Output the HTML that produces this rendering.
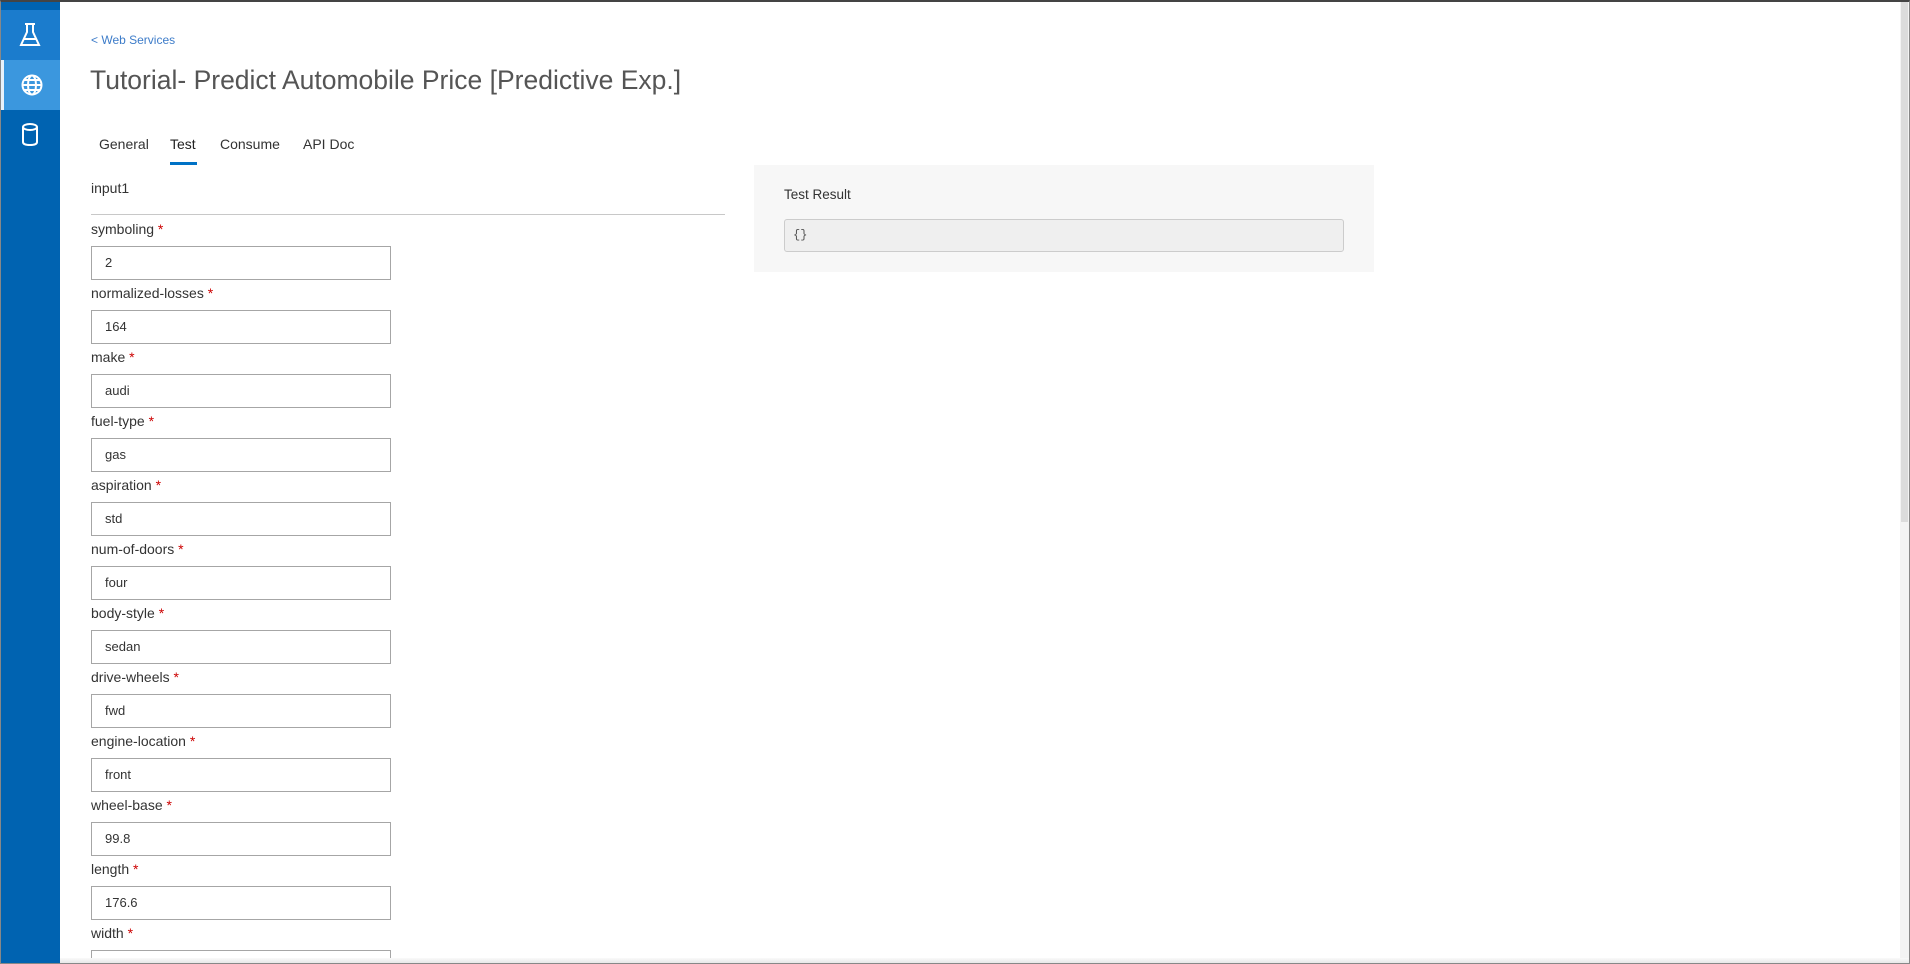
<!DOCTYPE html>
<html><head><meta charset="utf-8"><style>
*{margin:0;padding:0;box-sizing:border-box}
html,body{width:1910px;height:964px;overflow:hidden;background:#fff;font-family:"Segoe UI","Liberation Sans",sans-serif;color:#333}
.frame{position:absolute;left:0;top:0;width:1910px;height:964px;border:1px solid #888;border-top:2px solid #444}
.side{position:absolute;left:0;top:0;width:60px;height:964px;background:#0063b1}
.it{position:absolute;left:0;width:60px;height:50px;display:flex;align-items:center;justify-content:center}
.abs{position:absolute}
.lbl{position:absolute;left:91px;font-size:14px;color:#333}
.lbl b{color:#c00;font-weight:normal}
.inp{position:absolute;left:91px;width:300px;height:34px;border:1px solid #a6a6a6;font-size:13px;padding-left:13px;line-height:32px;color:#333}
</style></head><body>
<div class="side">
 <div class="it" style="top:10px;background:#1b7ccd">
  <svg width="22" height="26" viewBox="0 0 22 26" fill="none" stroke="#fff" stroke-width="2"><path d="M6 2h10M8 2v8L2 23h18L14 10V2M5 17h12"/></svg>
 </div>
 <div class="it" style="top:60px;background:#3b97de;border-left:4px solid #e8f2fb">
  <svg width="24" height="24" viewBox="0 0 24 24" fill="none" stroke="#fff" stroke-width="2"><circle cx="12" cy="12" r="9.5"/><ellipse cx="12" cy="12" rx="4" ry="9.5"/><path d="M2.5 12h19M4 7h16M4 17h16"/></svg>
 </div>
 <div class="it" style="top:110px">
  <svg width="18" height="26" viewBox="0 0 18 26" fill="none" stroke="#fff" stroke-width="2"><ellipse cx="9" cy="5" rx="7" ry="3"/><path d="M2 5v15c0 2 3 3 7 3s7-1 7-3V5"/></svg>
 </div>
</div>
<div class="abs" style="left:91px;top:33px;font-size:12px;color:#3d7cc9">&lt; Web Services</div>
<div class="abs" style="left:90px;top:65px;font-size:26.5px;font-weight:300;color:#555">Tutorial- Predict Automobile Price [Predictive Exp.]</div>
<div class="abs" style="left:99px;top:136px;font-size:14px;color:#333">General</div>
<div class="abs" style="left:170px;top:136px;font-size:14px;color:#222">Test</div>
<div class="abs" style="left:170px;top:162px;width:27px;height:3px;background:#0072c6"></div>
<div class="abs" style="left:220px;top:136px;font-size:14px;color:#333">Consume</div>
<div class="abs" style="left:303px;top:136px;font-size:14px;color:#333">API Doc</div>
<div class="abs" style="left:91px;top:180px;font-size:14px;color:#333">input1</div>
<div class="abs" style="left:91px;top:214px;width:634px;height:1px;background:#c8c8c8"></div>

<div class="lbl" style="top:221px">symboling <b>*</b></div><div class="inp" style="top:246px">2</div>
<div class="lbl" style="top:285px">normalized-losses <b>*</b></div><div class="inp" style="top:310px">164</div>
<div class="lbl" style="top:349px">make <b>*</b></div><div class="inp" style="top:374px">audi</div>
<div class="lbl" style="top:413px">fuel-type <b>*</b></div><div class="inp" style="top:438px">gas</div>
<div class="lbl" style="top:477px">aspiration <b>*</b></div><div class="inp" style="top:502px">std</div>
<div class="lbl" style="top:541px">num-of-doors <b>*</b></div><div class="inp" style="top:566px">four</div>
<div class="lbl" style="top:605px">body-style <b>*</b></div><div class="inp" style="top:630px">sedan</div>
<div class="lbl" style="top:669px">drive-wheels <b>*</b></div><div class="inp" style="top:694px">fwd</div>
<div class="lbl" style="top:733px">engine-location <b>*</b></div><div class="inp" style="top:758px">front</div>
<div class="lbl" style="top:797px">wheel-base <b>*</b></div><div class="inp" style="top:822px">99.8</div>
<div class="lbl" style="top:861px">length <b>*</b></div><div class="inp" style="top:886px">176.6</div>
<div class="lbl" style="top:925px">width <b>*</b></div><div class="inp" style="top:950px;height:12px;border-bottom:none"></div>

<div class="abs" style="left:754px;top:165px;width:620px;height:107px;background:#f7f7f7"></div>
<div class="abs" style="left:784px;top:187px;font-size:13.5px;color:#333">Test Result</div>
<div class="abs" style="left:784px;top:219px;width:560px;height:33px;background:#efefef;border:1px solid #ccc;border-radius:3px;font-family:'Liberation Mono',monospace;font-size:12px;color:#555;padding-left:8px;line-height:31px">{}</div>

<div class="abs" style="left:1900px;top:0;width:9px;height:964px;background:#f4f4f4"></div>
<div class="abs" style="left:1901px;top:2px;width:7px;height:520px;background:#dcdcdc"></div>
<div class="abs" style="left:60px;top:958px;width:1850px;height:6px;background:linear-gradient(#fafafa,#e4e4e4)"></div>
<div class="frame"></div>
</body></html>
